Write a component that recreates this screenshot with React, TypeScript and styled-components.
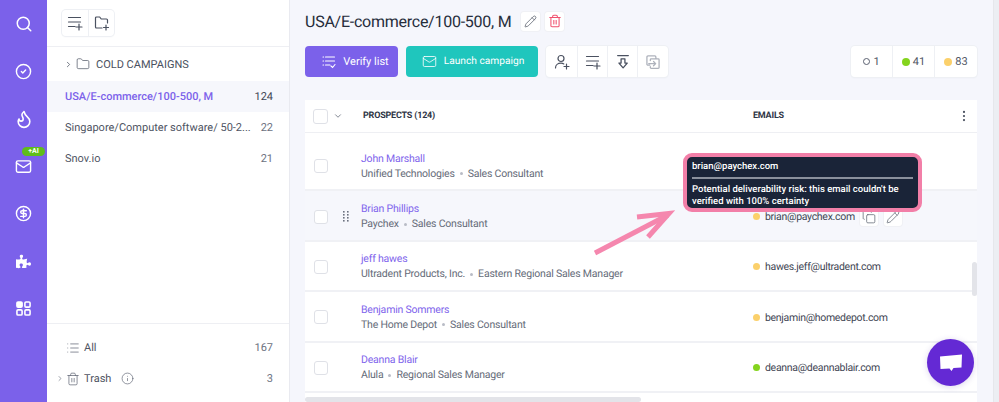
import React from "react";
import styled, { createGlobalStyle } from "styled-components";
import { Search, CircleCheck, Flame, Mail, CircleDollarSign, ChevronRight, ChevronDown, Folder, List, Trash2, Info, Pencil, Copy, EllipsisVertical } from "lucide-react";
import { FaPuzzlePiece } from "react-icons/fa";

const Global = createGlobalStyle`
  html, body { margin: 0; padding: 0; height: 100%; overflow: hidden; }
  body { font-family: Roboto, "Liberation Sans", sans-serif; color: #3b4252; text-rendering: geometricPrecision; }
  * { box-sizing: border-box; }
`;

const Page = styled.div`display: flex; width: 999px; height: 402px; overflow: hidden; background: #f5f6fc; position: relative;`;

const Rail = styled.nav`
  width: 47px; flex: none; background: #7b61ea; display: flex; flex-direction: column; align-items: center;
  padding-top: 13.5px; gap: 27.5px; color: #fff;
`;
const RailItem = styled.div`position: relative; width: 20px; height: 20px; display: flex; align-items: center; justify-content: center;`;
const AiBadge = styled.span`
  position: absolute; top: -9px; left: 8.5px; width: 23px; height: 9px; border-radius: 5px; background: #5fbd1a; color: #fff;
  font-size: 7px; font-weight: 700; line-height: 9px; text-align: center;
`;

const Panel = styled.aside`
  width: 243px; flex: none; background: #fff; border-right: 1px solid #e9eaf0; display: flex; flex-direction: column;
`;
const PanelTop = styled.div`height: 47px; flex: none; padding: 10px 0 0 15px; border-bottom: 1px solid #eeeff3;`;
const ButtonGroup = styled.div`
  display: inline-flex; background: #fff; border-radius: 4px; box-shadow: 0 0 0 1px #eef0f4, 0 1px 2px rgba(40,50,90,.06);
`;
const IconCell = styled.div<{ $w: number; $h: number; $muted?: boolean }>`
  width: ${p => p.$w}px; height: ${p => p.$h}px; display: flex; align-items: center; justify-content: center; color: ${p => p.$muted ? "#aeb2bc" : "#4a5160"};
  & + & { border-left: 1px solid #eef0f4; }
`;
const FolderRow = styled.div`
  height: 34px; display: flex; align-items: center; padding-left: 17px; gap: 3px; font-size: 11px; color: #4a5160;
`;
const FolderLabel = styled.span`margin-left: 3px;`;
const ListRows = styled.div`flex: 1;`;
const ListRow = styled.div<{ $active?: boolean }>`
  height: 31px; display: flex; align-items: center; justify-content: space-between; padding: 0 16px 0 18px; font-size: 11px;
  background: ${p => p.$active ? "#f6f7fc" : "transparent"}; color: ${p => p.$active ? "#7b61ea" : "#4f5563"};
  font-weight: ${p => p.$active ? 500 : 400};
`;
const RowName = styled.span`white-space: nowrap;`;
const RowCount = styled.span<{ $active?: boolean }>`color: ${p => p.$active ? "#3f4654" : "#6c7280"}; font-weight: 400;`;
const PanelBottom = styled.div`height: 79px; flex: none; border-top: 1px solid #eeeff3; padding-top: 8px;`;
const BottomRow = styled.div`
  height: 31px; display: flex; align-items: center; padding: 0 16px 0 9px; font-size: 11px; color: #4f5563; position: relative;
`;
const Caret = styled.span`width: 8px; display: flex; align-items: center; color: #6c7280;`;
const BottomLabel = styled.span`margin-left: 4px;`;
const BottomIcon = styled.span`margin-left: 2px; display: flex; width: 14px; color: #5a6070;`;
const InfoIcon = styled.span`margin-left: 10px; display: flex; color: #5a6070;`;
const BottomCount = styled.span`margin-left: auto; color: #6c7280;`;

const Main = styled.main`flex: 1; min-width: 0; padding: 0 16px 0 15px; display: flex; flex-direction: column;`;
const TitleRow = styled.div`height: 46px; flex: none; display: flex; align-items: center; padding-bottom: 4px;`;
const Title = styled.h1`margin: 0; font-size: 16px; letter-spacing: -0.25px; font-weight: 400; color: #262d3b;`;
const SmallBtn = styled.button<{ $red?: boolean; $first?: boolean }>`
  width: 19px; height: 19px; padding: 0; border: 0; border-radius: 3px; background: #fff; margin-left: ${p => p.$first ? "10px" : "5px"};
  display: flex; align-items: center; justify-content: center; color: ${p => p.$red ? "#f0506e" : "#555b69"}; box-shadow: 0 0 0 1px #f0f1f5;
`;
const Toolbar = styled.div`display: flex; height: 31px; flex: none; align-items: stretch;`;
const Action = styled.button<{ $bg: string; $w: number; $fs: number; $pl: number }>`
  width: ${p => p.$w}px; margin-right: 8px; border: 0; border-radius: 4px; background: ${p => p.$bg}; color: #fff;
  font-family: Roboto, sans-serif; font-weight: 400; font-size: ${p => p.$fs}px; text-rendering: geometricPrecision;
  display: flex; align-items: center; justify-content: center; gap: 7px; padding: 0 0 0 ${p => p.$pl}px;
`;
const Stats = styled.div`
  margin-left: auto; display: flex; background: #fff; border-radius: 4px; box-shadow: 0 0 0 1px #eef0f4, 0 1px 2px rgba(40,50,90,.06);
`;
const Stat = styled.div<{ $w: number }>`
  width: ${p => p.$w}px; display: flex; align-items: center; justify-content: center; gap: 3px; font-size: 11px; color: #4f5563;
  & + & { border-left: 1px solid #eef0f4; }
`;
const Dot = styled.span<{ $c: string }>`width: 8px; height: 8px; border-radius: 50%; background: ${p => p.$c}; flex: none;`;
const Ring = styled.span`width: 7px; height: 7px; border-radius: 50%; border: 1.7px solid #5a6070; flex: none;`;

const Table = styled.section`margin-top: 23px; flex: 1; min-height: 0; background: #fff; position: relative; overflow: hidden;`;
const Head = styled.div`
  height: 33px; display: flex; align-items: center; padding: 0 6px 0 8px; border-bottom: 1px solid #eeeff3; margin-bottom: 8px; position: relative;
`;
const Check = styled.span`width: 15px; height: 15px; border-radius: 3px; border: 1px solid #dfe1e7; background: #fff; flex: none;`;
const HeadChevron = styled.span`width: 35px; padding-left: 5px; display: flex; color: #6c7280;`;
const HeadCell = styled.div<{ $w?: number }>`
  font-size: 9px; letter-spacing: -0.2px; font-weight: 700; color: #2f3646; ${p => p.$w ? `width: ${p.$w}px;` : "flex: 1;"}
`;
const HeadDots = styled.span`display: flex; color: #4a5160;`;
const Row = styled.div<{ $hover?: boolean }>`
  height: 50.4px; display: flex; align-items: center; padding: 2px 0 0 9px; border-bottom: 2px solid #f0f1f5;
  background: ${p => p.$hover ? "#f6f7fc" : "#fff"};
`;
const RowCheck = styled(Check)`width: 14px; height: 14px;`;
const Handle = styled.span`width: 33px; display: flex; justify-content: flex-start; padding-left: 15px; color: #6c7280;`;
const Person = styled.div`width: 392px; flex: none; display: flex; flex-direction: column; gap: 2px; font-size: 10.5px; letter-spacing: -0.2px;`;
const PersonName = styled.div`line-height: 13px; color: #8064ec;`;
const PersonSub = styled.div`line-height: 14px; color: #656b78; display: flex; align-items: center; gap: 5px;`;
const Sep = styled.span`width: 3px; height: 3px; border-radius: 50%; background: #b9bcc6;`;
const EmailCell = styled.div`display: flex; align-items: center; gap: 4px; font-size: 10.5px; letter-spacing: -0.3px; color: #3f4654;`;
const EmailDot = styled(Dot)`width: 7px; height: 7px; margin-right: 1px;`;
const HoverBtn = styled.button<{ $first?: boolean }>`
  width: 18px; height: 18px; padding: 0; border: 0; background: #fff; border-radius: 3px; color: #555b69; margin-left: ${p => p.$first ? "1px" : "2px"};
  display: flex; align-items: center; justify-content: center; box-shadow: 0 0 0 1px #f0f1f5;
`;
const VBar = styled.div`position: absolute; right: 0; top: 162px; width: 5px; height: 34px; border-radius: 3px; background: #e3e4e9;`;
const HBar = styled.div`position: absolute; left: 0; bottom: 0; width: 336px; height: 5px; border-radius: 3px; background: #e3e4e9;`;
const PageBar = styled.div`width: 6px; flex: none; background: #eceef3; border-left: 1px solid #e6e7ec;`;

const Tooltip = styled.div`
  position: absolute; left: 683px; top: 153px; width: 239px; height: 59px; border: 4px solid #f27fa8; border-radius: 9px; background: #1a2438; color: #fff;
  padding: 4px 5px; font-size: 9.5px; font-weight: 500; line-height: 12px;
`;
const TooltipRule = styled.div`height: 1.5px; background: #8a909c; margin: 4px 0 5px;`;
const Arrow = styled.svg`position: absolute; left: 590px; top: 208px; width: 90px; height: 50px;`;
const Chat = styled.div`
  position: absolute; left: 927px; top: 339px; width: 47px; height: 47px; border-radius: 50%; background: #6429d4; display: flex; align-items: center; justify-content: center;
  box-shadow: 0 1px 6px rgba(80,50,160,.2);
`;

const people = [
  { n: "John Marshall", c: "Unified Technologies", t: "Sales Consultant", e: "", d: "" },
  { n: "Brian Phillips", c: "Paychex", t: "Sales Consultant", e: "brian@paychex.com", d: "#fbd06b", h: true },
  { n: "jeff hawes", c: "Ultradent Products, Inc.", t: "Eastern Regional Sales Manager", e: "hawes.jeff@ultradent.com", d: "#fbd06b" },
  { n: "Benjamin Sommers", c: "The Home Depot", t: "Sales Consultant", e: "benjamin@homedepot.com", d: "#fbd06b" },
  { n: "Deanna Blair", c: "Alula", t: "Regional Sales Manager", e: "deanna@deannablair.com", d: "#84d41d" },
];

const GridIcon = () => (
  <svg width="15" height="15" viewBox="0 0 16 16" fill="none" stroke="#fff" strokeWidth="1.7">
    <rect x="1" y="1" width="5.5" height="5.5" rx="1.2" fill="#fff" /><rect x="9.5" y="1" width="5.5" height="5.5" rx="1.2" />
    <rect x="1" y="9.5" width="5.5" height="5.5" rx="1.2" /><rect x="9.5" y="9.5" width="5.5" height="5.5" rx="1.2" />
  </svg>
);
const VerifyIcon = () => (
  <svg width="14" height="14" viewBox="0 0 14 14" fill="none" stroke="#fff" strokeWidth="1.1" strokeLinecap="round">
    <path d="M1 2h.6M3.500 2h9M1 6h.6M3.500 6h9M1 10h.6M3.500 10h4.500M9 11l1.600 1.500L13 9.500" />
  </svg>
);
const AddListIcon = () => (
  <svg width="16" height="16" viewBox="0 0 16 16" fill="none" stroke="currentColor" strokeWidth="1.2" strokeLinecap="round">
    <path d="M1.500 2.500h12M1.500 7h12M1.500 11.500h6.500M12 9v6M9 12h6" />
  </svg>
);
const AddFolderIcon = () => (
  <svg width="16" height="16" viewBox="0 0 16 16" fill="none" stroke="currentColor" strokeWidth="1.2" strokeLinecap="round" strokeLinejoin="round">
    <path d="M8 13H2.500a1 1 0 0 1-1-1V3a1 1 0 0 1 1-1h3.200l1.500 2h5.300a1 1 0 0 1 1 1v3M12 10v5M9.500 12.500h5" />
  </svg>
);
const AddUserIcon = () => (
  <svg width="16" height="16" viewBox="0 0 16 16" fill="none" stroke="currentColor" strokeWidth="1.2" strokeLinecap="round">
    <circle cx="7" cy="4.500" r="3" />
    <path d="M1.500 14c0-3 2.500-4.800 5.500-4.800 1 0 2 .2 2.800.7M12.500 10v5M10 12.500h5" />
  </svg>
);
const ExportIcon = () => (
  <svg width="16" height="16" viewBox="0 0 15 15" fill="none" stroke="#4a5160" strokeWidth="1.2" strokeLinejoin="round" strokeLinecap="round">
    <path d="M2.500 1.500h10M5.700 4.500h3.600v4h2.200l-3.900 4.500-3.900-4.500h2z" />
  </svg>
);
const MergeIcon = () => (
  <svg width="16" height="16" viewBox="0 0 15 15" fill="none" stroke="#aeb2bc" strokeWidth="1.2" strokeLinejoin="round" strokeLinecap="round">
    <path d="M4.500 10.500H2.800a1 1 0 0 1-1-1V2.800a1 1 0 0 1 1-1h6.400a1 1 0 0 1 1 1v1.700M5 6.200V5.300a.8.8 0 0 1 .8-.8h6.600a.8.8 0 0 1 .8.8v7.400a.8.8 0 0 1-.8.8H5.800a.8.8 0 0 1-.8-.8v-.9M3.500 9h6M8 7l2 2-2 2" />
  </svg>
);
const GripIcon = () => (
  <svg width="6" height="12" viewBox="0 0 6 12" fill="#6c7280">
    {[0, 3, 6, 9].flatMap(y => [0, 4].map(x => <rect key={`${x}-${y}`} x={x} y={y} width="1.6" height="1.6" />))}
  </svg>
);

export default function App() {
  return (
    <Page>
      <Global />
      <Rail>
        <RailItem><Search size={18} strokeWidth={2} /></RailItem>
        <RailItem><CircleCheck size={17} strokeWidth={2} /></RailItem>
        <RailItem><Flame size={20} strokeWidth={1.9} /></RailItem>
        <RailItem><AiBadge>+AI</AiBadge><Mail size={17} strokeWidth={2} /></RailItem>
        <RailItem><CircleDollarSign size={17} strokeWidth={2} /></RailItem>
        <RailItem><FaPuzzlePiece size={15} /></RailItem>
        <RailItem><GridIcon /></RailItem>
      </Rail>
      <Panel>
        <PanelTop>
          <ButtonGroup>
            <IconCell $w={26} $h={26}><AddListIcon /></IconCell>
            <IconCell $w={26} $h={26}><AddFolderIcon /></IconCell>
          </ButtonGroup>
        </PanelTop>
        <FolderRow>
          <ChevronRight size={9} strokeWidth={2} />
          <Folder size={14} strokeWidth={1.2} />
          <FolderLabel>COLD CAMPAIGNS</FolderLabel>
        </FolderRow>
        <ListRows>
          <ListRow $active><RowName>USA/E-commerce/100-500, M</RowName><RowCount $active>124</RowCount></ListRow>
          <ListRow><RowName>Singapore/Computer software/ 50-2...</RowName><RowCount>22</RowCount></ListRow>
          <ListRow><RowName>Snov.io</RowName><RowCount>21</RowCount></ListRow>
        </ListRows>
        <PanelBottom>
          <BottomRow><Caret /><BottomIcon><List size={14} strokeWidth={1.2} /></BottomIcon><BottomLabel>All</BottomLabel><BottomCount>167</BottomCount></BottomRow>
          <BottomRow>
            <Caret><ChevronRight size={9} strokeWidth={2} /></Caret>
            <BottomIcon><Trash2 size={14} strokeWidth={1.2} /></BottomIcon><BottomLabel>Trash</BottomLabel>
            <InfoIcon><Info size={13} strokeWidth={1.2} /></InfoIcon><BottomCount>3</BottomCount>
          </BottomRow>
        </PanelBottom>
      </Panel>
      <Main>
        <TitleRow>
          <Title>USA/E-commerce/100-500, M</Title>
          <SmallBtn $first><Pencil size={13} strokeWidth={1.4} /></SmallBtn>
          <SmallBtn $red><Trash2 size={14} strokeWidth={1.8} /></SmallBtn>
        </TitleRow>
        <Toolbar>
          <Action $bg="#7b61ea" $w={93} $fs={11} $pl={8}><VerifyIcon />Verify list</Action>
          <Action $bg="#1fc6bd" $w={132} $fs={10.2} $pl={2}><Mail size={15} strokeWidth={1.3} />Launch campaign</Action>
          <ButtonGroup>
            <IconCell $w={31} $h={31}><AddUserIcon /></IconCell>
            <IconCell $w={30} $h={31}><AddListIcon /></IconCell>
            <IconCell $w={30} $h={31}><ExportIcon /></IconCell>
            <IconCell $w={31} $h={31} $muted><MergeIcon /></IconCell>
          </ButtonGroup>
          <Stats>
            <Stat $w={41}><Ring />1</Stat>
            <Stat $w={42}><Dot $c="#84d41d" />41</Stat>
            <Stat $w={43}><Dot $c="#fbd06b" />83</Stat>
          </Stats>
        </Toolbar>
        <Table>
          <Head>
            <Check />
            <HeadChevron><ChevronDown size={10} strokeWidth={2} /></HeadChevron>
            <HeadCell $w={390}>PROSPECTS (124)</HeadCell>
            <HeadCell>EMAILS</HeadCell>
            <HeadDots><EllipsisVertical size={14} strokeWidth={1.8} /></HeadDots>
          </Head>
          {people.map(p => (
            <Row key={p.n} $hover={p.h}>
              <RowCheck />
              <Handle>{p.h && <GripIcon />}</Handle>
              <Person>
                <PersonName>{p.n}</PersonName>
                <PersonSub>{p.c}<Sep />{p.t}</PersonSub>
              </Person>
              {p.e && (
                <EmailCell>
                  <EmailDot $c={p.d} />{p.e}
                  {p.h && <HoverBtn $first><Copy size={14} strokeWidth={1.2} /></HoverBtn>}
                  {p.h && <HoverBtn><Pencil size={14} strokeWidth={1.2} /></HoverBtn>}
                </EmailCell>
              )}
            </Row>
          ))}
          <VBar />
          <HBar />
        </Table>
      </Main>
      <PageBar />
      <Tooltip>
        brian@paychex.com
        <TooltipRule />
        Potential deliverability risk: this email couldn't be verified with 100% certainty
      </Tooltip>
      <Arrow viewBox="0 0 90 50" fill="none" stroke="#f587ae" strokeWidth="5">
        <path d="M5 45 L78 7" />
        <path d="M47 9 L79 5.500 L58 29" />
      </Arrow>
      <Chat>
        <svg width="24" height="20" viewBox="0 0 24 20" fill="#fff"><path d="M1 3.500 L23 1.500 L22.500 14.500 L14.500 15 L12.500 18 L10.500 15.500 L1.500 16 Z" /></svg>
      </Chat>
    </Page>
  );
}
